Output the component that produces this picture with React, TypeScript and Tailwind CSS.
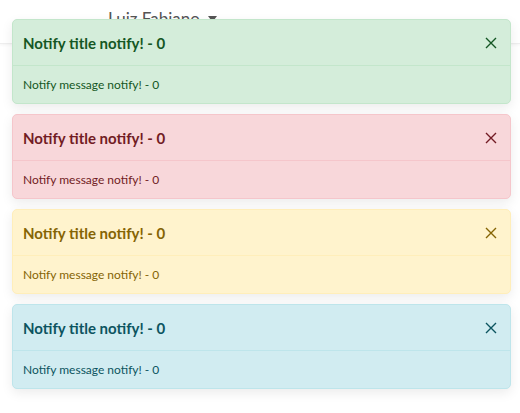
import React from 'react';

type Variant = 'success' | 'danger' | 'warning' | 'info';

const styles: Record<Variant, { box: string; line: string; text: string }> = {
  success: { box: 'bg-[#d4edda] border-[#c3e6cb]', line: 'border-[#c3e6cb]', text: 'text-[#155724]' },
  danger: { box: 'bg-[#f8d7da] border-[#f5c6cb]', line: 'border-[#f5c6cb]', text: 'text-[#721c24]' },
  warning: { box: 'bg-[#fff3cd] border-[#ffeeba]', line: 'border-[#ffeeba]', text: 'text-[#856404]' },
  info: { box: 'bg-[#d1ecf1] border-[#bee5eb]', line: 'border-[#bee5eb]', text: 'text-[#0c5460]' },
};

function Toast({ variant, title, message }: { variant: Variant; title: string; message: string }) {
  const s = styles[variant];
  return (
    <div className={`rounded-[5px] border shadow-[0_4px_12px_rgba(0,0,0,0.08)] ${s.box} ${s.text}`}>
      <div className={`flex h-[46px] items-center justify-between border-b pl-[10px] pr-[13px] pt-[1px] ${s.line}`}>
        <h3 className="text-[15px] font-bold">{title}</h3>
        <button className="flex items-center justify-center">
          <svg width="12" height="12" viewBox="0 0 12 12" fill="none" stroke="currentColor" strokeWidth="1.4">
            <path d="M1 1l10 10M11 1L1 11" />
          </svg>
        </button>
      </div>
      <div className="flex h-[37px] items-center px-[10px] pt-[1px] text-[12px]">{message}</div>
    </div>
  );
}

export default function App() {
  const toasts: Variant[] = ['success', 'danger', 'warning', 'info'];
  return (
    <div className="relative h-[413px] w-[520px] overflow-hidden bg-white font-['Lato',sans-serif]">
      <nav className="flex h-[44px] items-start border-b border-[#eeeeee] bg-white pl-[108px] pt-[6px] shadow-[0_1px_3px_rgba(0,0,0,0.05)]">
        <span className="flex items-center gap-2 text-[17px] text-[#555]">
          Luiz Fabiano
          <svg width="9" height="6" viewBox="0 0 9 6" fill="currentColor">
            <path d="M0 0h9L4.5 6z" />
          </svg>
        </span>
      </nav>
      <div className="absolute left-[12px] top-[19px] flex w-[499px] flex-col gap-[10px]">
        {toasts.map((v) => (
          <Toast key={v} variant={v} title="Notify title notify! - 0" message="Notify message notify! - 0" />
        ))}
      </div>
    </div>
  );
}
